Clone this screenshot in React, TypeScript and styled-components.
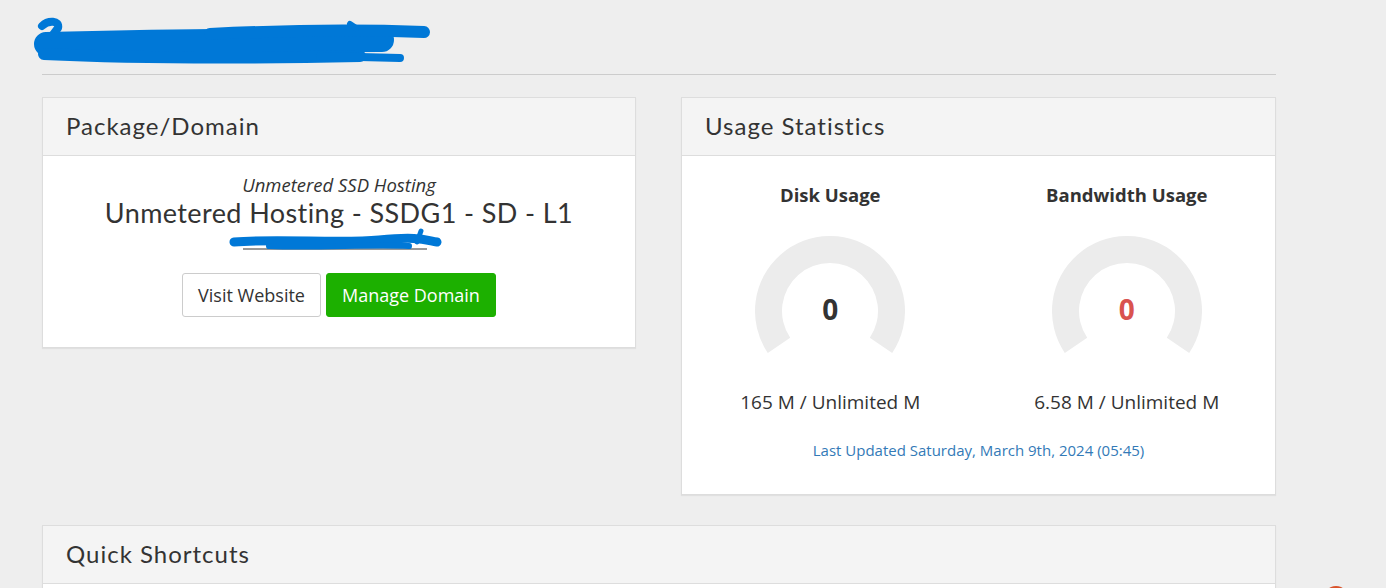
import React from "react";
import styled, { createGlobalStyle } from "styled-components";

const Global = createGlobalStyle`
  html, body { margin: 0; padding: 0; background: #eeeeee; }
  body { font-family: "Open Sans", "Noto Sans", sans-serif; color: #333; }
  * { box-sizing: border-box; }
`;

const Page = styled.div`
  width: 1386px;
  min-height: 588px;
  padding: 0 110px 0 42px;
  position: relative;
  overflow: hidden;
`;

const TitleBar = styled.div`
  height: 75px;
  border-bottom: 1px solid #cccccc;
  display: flex;
  align-items: flex-start;
  padding-top: 16px;
`;

const ScribbleBox = styled.div`
  margin-left: -12px;
`;

const Columns = styled.div`
  display: grid;
  grid-template-columns: 594px 595px;
  column-gap: 45px;
  align-items: start;
  margin-top: 22px;
`;

const Panel = styled.section`
  background: #fff;
  border: 1px solid #dddddd;
  box-shadow: 0 1px 1px rgba(0, 0, 0, 0.06);
`;

const WidePanel = styled(Panel)`
  margin-top: 30px;
  height: 80px;
`;

const PanelHeader = styled.header`
  height: 58px;
  background: #f4f4f4;
  border-bottom: 1px solid #dddddd;
  display: flex;
  align-items: center;
  padding: 0 23px 2px;
`;

const PanelTitle = styled.h3`
  margin: 0;
  font-family: "Lato", "Open Sans", sans-serif;
  font-weight: 400;
  font-size: 24px;
  letter-spacing: 1px;
  color: #333;
`;

const PackageBody = styled.div`
  display: flex;
  flex-direction: column;
  align-items: center;
  padding: 16px 15px 30px;
`;

const PlanType = styled.div`
  font-style: italic;
  font-size: 18.5px;
  line-height: 26px;
  color: #333;
`;

const PlanName = styled.div`
  font-family: "Lato", "Open Sans", sans-serif;
  font-size: 27px;
  letter-spacing: 0.4px;
  line-height: 30px;
  color: #333;
`;

const Buttons = styled.div`
  display: flex;
  gap: 5px;
  margin-top: 19px;
`;

const Button = styled.a<{ $primary?: boolean }>`
  display: inline-flex;
  align-items: center;
  height: 44px;
  padding: 0 15px;
  font-size: 18px;
  border-radius: 3px;
  text-decoration: none;
  border: 1px solid ${(p) => (p.$primary ? "#1cb000" : "#cccccc")};
  background: ${(p) => (p.$primary ? "#1cb000" : "#ffffff")};
  color: ${(p) => (p.$primary ? "#ffffff" : "#333333")};
`;

const StatsBody = styled.div`
  padding: 26px 0 34px;
  display: flex;
  flex-direction: column;
  align-items: center;
`;

const StatsRow = styled.div`
  display: grid;
  grid-template-columns: 1fr 1fr;
  width: 100%;
`;

const Stat = styled.div`
  display: flex;
  flex-direction: column;
  align-items: center;
`;

const StatTitle = styled.h4`
  margin: 0;
  font-size: 18.5px;
  font-weight: 700;
  line-height: 26px;
  color: #333;
`;

const GaugeWrap = styled.div`
  position: relative;
  width: 150px;
  height: 120px;
  margin-top: 28px;
`;

const GaugeValue = styled.span<{ $danger?: boolean }>`
  position: absolute;
  left: 0;
  right: 0;
  top: 54px;
  text-align: center;
  font-size: 28px;
  font-weight: 700;
  line-height: 38px;
  color: ${(p) => (p.$danger ? "#d9534f" : "#333333")};
`;

const StatAmount = styled.div`
  margin-top: 33px;
  font-size: 19px;
  line-height: 26px;
  color: #333;
`;

const Updated = styled.div`
  margin-top: 25px;
  font-size: 15px;
  line-height: 20px;
  color: #337ab7;
`;

const ChatBubble = styled.div`
  position: absolute;
  left: 1323px;
  top: 586px;
  width: 26px;
  height: 26px;
  border-radius: 50%;
  background: #d9532b;
`;

const Gauge: React.FC<{ value: string; danger?: boolean }> = ({ value, danger }) => (
  <GaugeWrap>
    <svg width="150" height="120" viewBox="0 0 150 120">
      <path
        d="M 12.8 116.9 A 75 75 0 1 1 137.2 116.9 L 114.8 101.8 A 48 48 0 1 0 35.2 101.8 Z"
        fill="#ececec"
      />
    </svg>
    <GaugeValue $danger={danger}>{value}</GaugeValue>
  </GaugeWrap>
);

const Scribble: React.FC = () => (
  <svg width="410" height="50" viewBox="0 0 410 50">
    <g stroke="#0078d7" strokeLinecap="round" strokeLinejoin="round" fill="none">
      <path d="M 16 28 C 100 26, 220 24, 352 24" strokeWidth="24" />
      <path d="M 180 18 C 260 14, 340 14, 394 16" strokeWidth="12" />
      <path d="M 14 38 C 100 42, 230 42, 330 40" strokeWidth="12" />
      <path d="M 290 40 L 370 42" strokeWidth="8" />
      <path d="M 12 10 C 18 4, 30 4, 28 12 L 22 20" strokeWidth="8" />
      <path d="M 320 8 L 326 12" strokeWidth="6" />
    </g>
  </svg>
);

const LinkScribble: React.FC = () => (
  <svg width="220" height="26" viewBox="0 0 220 26">
    <line x1="14" y1="21" x2="198" y2="21" stroke="#333" strokeWidth="1" />
    <g stroke="#0078d7" strokeLinecap="round" strokeLinejoin="round" fill="none">
      <path d="M 5 14 C 50 10, 110 16, 150 12 S 196 12, 208 14" strokeWidth="9" />
      <path d="M 40 18 C 90 20, 140 16, 180 18" strokeWidth="6" />
      <path d="M 188 14 L 192 3" strokeWidth="5" />
    </g>
  </svg>
);

export default function App() {
  return (
    <Page>
      <Global />
      <TitleBar>
        <ScribbleBox>
          <Scribble />
        </ScribbleBox>
      </TitleBar>
      <Columns>
        <Panel>
          <PanelHeader>
            <PanelTitle>Package/Domain</PanelTitle>
          </PanelHeader>
          <PackageBody>
            <PlanType>Unmetered SSD Hosting</PlanType>
            <PlanName>Unmetered Hosting - SSDG1 - SD - L1</PlanName>
            <LinkScribble />
            <Buttons>
              <Button href="#">Visit Website</Button>
              <Button href="#" $primary>
                Manage Domain
              </Button>
            </Buttons>
          </PackageBody>
        </Panel>
        <Panel>
          <PanelHeader>
            <PanelTitle>Usage Statistics</PanelTitle>
          </PanelHeader>
          <StatsBody>
            <StatsRow>
              <Stat>
                <StatTitle>Disk Usage</StatTitle>
                <Gauge value="0" />
                <StatAmount>165 M / Unlimited M</StatAmount>
              </Stat>
              <Stat>
                <StatTitle>Bandwidth Usage</StatTitle>
                <Gauge value="0" danger />
                <StatAmount>6.58 M / Unlimited M</StatAmount>
              </Stat>
            </StatsRow>
            <Updated>Last Updated Saturday, March 9th, 2024 (05:45)</Updated>
          </StatsBody>
        </Panel>
      </Columns>
      <WidePanel>
        <PanelHeader>
          <PanelTitle>Quick Shortcuts</PanelTitle>
        </PanelHeader>
      </WidePanel>
      <ChatBubble />
    </Page>
  );
}
